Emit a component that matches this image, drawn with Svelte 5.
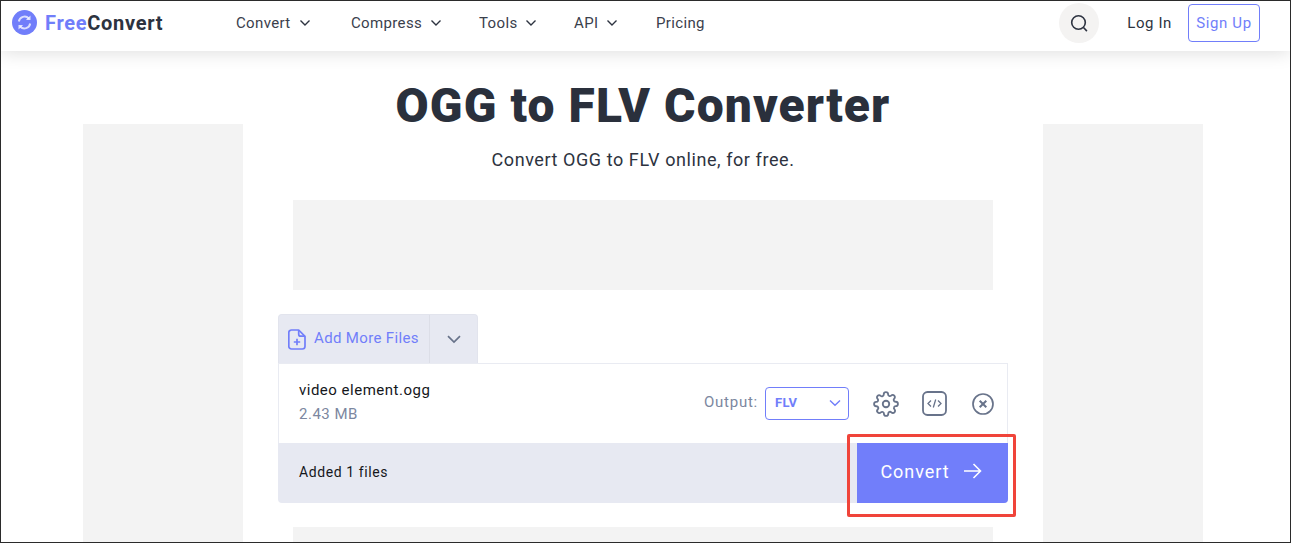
<script>
  const nav = ['Convert', 'Compress', 'Tools', 'API'];
</script>

<div class="frame">
  <header class="top">
    <a class="logo">
      <svg width="25" height="25" viewBox="0 0 25 25">
        <circle cx="12.5" cy="12.5" r="12.5" fill="#717efa" />
        <path d="M6.8 11.5a5.8 5.8 0 0 1 10-3" fill="none" stroke="#fff" stroke-width="1.9" opacity=".75" />
        <path d="M18.2 13.5a5.8 5.8 0 0 1-10 3" fill="none" stroke="#fff" stroke-width="1.9" opacity=".75" />
        <path d="M18.5 5.5v4.6h-4.6zM6.5 19.5v-4.6h4.6z" fill="#fff" opacity=".75" />
      </svg>
      <span class="free">Free</span><span class="conv">Convert</span>
    </a>
    <nav>
      {#each nav as item}
        <span class="nav-item">{item}
          <svg width="12" height="8" viewBox="0 0 12 8"><path d="M1.5 1.5 6 6l4.5-4.5" fill="none" stroke="#2d3340" stroke-width="1.4" /></svg>
        </span>
      {/each}
      <span class="nav-item">Pricing</span>
    </nav>
    <div class="right">
      <span class="search">
        <svg width="20" height="20" viewBox="0 0 20 20" fill="none" stroke="#2d3340" stroke-width="1.6"><circle cx="9.5" cy="9.5" r="6.8" /><path d="m14.5 14.5 3.4 3.6" /></svg>
      </span>
      <span class="login">Log In</span>
      <span class="signup">Sign Up</span>
    </div>
  </header>

  <main class="page">
    <div class="side"></div>
    <div class="center">
      <h1>OGG to FLV Converter</h1>
      <p class="sub">Convert OGG to FLV online, for free.</p>
      <div class="ad"></div>
      <section class="widget">
        <div class="tabs">
          <div class="add">
            <svg width="18" height="21" viewBox="0 0 18 21" fill="none" stroke="#717efa" stroke-width="1.7" stroke-linejoin="round"><path d="M3.5 1h7.2L17 7.3v10a2.700 2.700 0 0 1-2.700 2.700H3.500A2.700 2.700 0 0 1 .8 17.300V3.700A2.700 2.700 0 0 1 3.500 1z" /><path d="M10.700 1v4.200a2 2 0 0 0 2 2H17M9 9.800v6.400M5.800 13h6.400" /></svg>
            <span>Add More Files</span>
          </div>
          <div class="more">
            <svg width="14" height="9" viewBox="0 0 14 9"><path d="M1 1.200 7 7l6-5.800" fill="none" stroke="#68738a" stroke-width="1.700" /></svg>
          </div>
        </div>
        <div class="file">
          <div class="info">
            <div class="name">video element.ogg</div>
            <div class="size">2.43 MB</div>
          </div>
          <div class="controls">
            <span class="out">Output:</span>
            <span class="select">FLV
              <svg width="12" height="8" viewBox="0 0 12 8"><path d="M1 1.500 6 6.300l5-4.800" fill="none" stroke="#717efa" stroke-width="1.400" /></svg>
            </span>
            <svg class="gear" width="26" height="26" viewBox="0 0 24 24" fill="none" stroke="#68738a" stroke-width="1.700" stroke-linejoin="round"><circle cx="12" cy="12" r="3" /><path d="M19.400 15a1.650 1.650 0 0 0 .33 1.820l.06.06a2 2 0 1 1-2.830 2.830l-.06-.06a1.650 1.650 0 0 0-2.800 1.170V21a2 2 0 0 1-4 0v-.09A1.650 1.650 0 0 0 7.300 19.700l-.06.06a2 2 0 1 1-2.830-2.830l.06-.06a1.650 1.650 0 0 0-1.170-2.800H3a2 2 0 0 1 0-4h.09A1.650 1.650 0 0 0 4.300 7.300l-.06-.06a2 2 0 1 1 2.830-2.830l.06.06a1.650 1.650 0 0 0 2.800-1.170V3a2 2 0 0 1 4 0v.09a1.650 1.650 0 0 0 2.800 1.170l.06-.06a2 2 0 1 1 2.830 2.830l-.06.06a1.650 1.650 0 0 0 1.170 2.800H21a2 2 0 0 1 0 4h-.09A1.650 1.650 0 0 0 19.400 15z" /></svg>
            <svg class="code" width="25" height="25" viewBox="0 0 25 25" fill="none" stroke="#68738a" stroke-width="1.800"><rect x="1" y="1" width="23" height="23" rx="4.500" /><path d="M9 9.500 6 12.500l3 3M16 9.500l3 3-3 3M13.700 8.500l-2.400 8" stroke-width="1.300" /></svg>
            <svg class="close" width="22" height="22" viewBox="0 0 22 22" fill="none" stroke="#68738a"><circle cx="11" cy="11" r="10" stroke-width="1.700" /><path d="m7.700 7.700 6.600 6.600m0-6.600-6.600 6.600" stroke-width="2" /></svg>
          </div>
        </div>
        <div class="bar">
          <span class="added">Added 1 files</span>
          <span class="convert">Convert
            <svg width="19" height="16" viewBox="0 0 19 16" fill="none" stroke="#fff" stroke-width="1.600"><path d="M1 8h16.500M10.500 1l7 7-7 7" /></svg>
          </span>
          <span class="mark"></span>
        </div>
      </section>
      <div class="ad ad2"></div>
    </div>
    <div class="side"></div>
  </main>
</div>

<style>
  :global(body) {
    margin: 0;
    background: #fff;
  }
  .frame {
    box-sizing: border-box;
    width: 1291px;
    height: 543px;
    border: 1px solid #2b2b2b;
    overflow: hidden;
    font-family: Roboto, sans-serif;
    color: #2d3340;
    position: relative;
  }
  .top {
    display: flex;
    align-items: center;
    height: 50px;
    padding: 0 30px 7px 11px;
    box-sizing: border-box;
    background: #fff;
    box-shadow: 0 2px 18px rgba(0, 0, 0, 0.13);
    position: relative;
    z-index: 1;
  }
  .logo {
    display: flex;
    align-items: center;
    width: 224px;
    font-size: 20px;
    font-weight: 700;
    letter-spacing: 0.7px;
  }
  .logo svg {
    margin-right: 8px;
  }
  .free {
    color: #717efa;
  }
  .conv {
    color: #2d3340;
  }
  nav {
    display: grid;
    grid-template-columns: 115px 128px 95px 82px auto;
    font-size: 15px;
    letter-spacing: 0.35px;
    color: #3a404c;
  }
  .nav-item {
    display: flex;
    align-items: center;
    gap: 8px;
  }
  .right {
    margin-left: auto;
    display: flex;
    align-items: center;
  }
  .search {
    width: 40px;
    height: 40px;
    border-radius: 50%;
    background: #f4f3f2;
    display: flex;
    align-items: center;
    justify-content: center;
  }
  .login {
    font-size: 15px;
    margin-left: 28px;
    letter-spacing: 0.6px;
  }
  .signup {
    box-sizing: border-box;
    width: 72px;
    height: 38px;
    margin-left: 16px;
    border: 1px solid #717efa;
    border-radius: 4px;
    color: #717efa;
    font-size: 15px;
    letter-spacing: 0.6px;
    display: flex;
    align-items: center;
    justify-content: center;
  }
  .page {
    display: grid;
    grid-template-columns: 160px 800px 160px;
    padding-left: 82px;
  }
  .side {
    margin-top: 73px;
    height: 500px;
    background: #f3f3f3;
  }
  .center {
    display: flex;
    flex-direction: column;
    align-items: center;
  }
  h1 {
    margin: 27px 0 0;
    font-size: 48px;
    line-height: 56px;
    font-weight: 900;
    letter-spacing: 1.1px;
    color: #2a303c;
    white-space: nowrap;
  }
  .sub {
    margin: 14px 0 0;
    font-size: 18px;
    line-height: 24px;
    letter-spacing: 0.57px;
    color: #2d3340;
  }
  .ad {
    width: 700px;
    height: 90px;
    margin-top: 28px;
    background: #f3f3f3;
    flex: none;
  }
  .ad2 {
    margin-top: 24px;
  }
  .widget {
    width: 730px;
    margin-top: 24px;
  }
  .tabs {
    display: flex;
    width: 200px;
    height: 49px;
    background: #e7e9f2;
    border: 1px solid #e2e4ed;
    border-bottom: 0;
    border-radius: 4px 4px 0 0;
    box-sizing: border-box;
  }
  .add {
    width: 151px;
    display: flex;
    align-items: center;
    gap: 8px;
    padding-left: 9px;
    box-sizing: border-box;
    color: #717efa;
    font-size: 15px;
    letter-spacing: 0.35px;
    border-right: 1px solid #dcdee7;
  }
  .add span {
    padding-bottom: 2px;
  }
  .more {
    flex: 1;
    display: flex;
    align-items: center;
    justify-content: center;
  }
  .file {
    box-sizing: border-box;
    height: 80px;
    border: 1px solid #e9ebf2;
    border-bottom: 0;
    display: flex;
    align-items: center;
    justify-content: space-between;
    padding: 0 13px 0 20px;
  }
  .info {
    padding-bottom: 4px;
  }
  .name {
    font-size: 15px;
    line-height: 22px;
    color: #15171c;
    letter-spacing: 0.5px;
  }
  .size {
    font-size: 15px;
    line-height: 22px;
    color: #7c87a0;
    letter-spacing: 0.5px;
    margin-top: 2px;
  }
  .controls {
    display: flex;
    align-items: center;
  }
  .out {
    font-size: 15px;
    color: #7c87a0;
    letter-spacing: 0.75px;
    margin-right: 7px;
    padding-bottom: 3px;
  }
  .select {
    box-sizing: border-box;
    width: 84px;
    height: 33px;
    border: 1px solid #717efa;
    border-radius: 4px;
    display: flex;
    align-items: center;
    justify-content: space-between;
    padding: 0 7px 2px 9px;
    font-size: 13px;
    font-weight: 700;
    letter-spacing: 0.3px;
    color: #717efa;
  }
  .gear {
    margin-left: 24px;
  }
  .code {
    margin-left: 23px;
  }
  .close {
    margin-left: 25px;
  }
  .bar {
    height: 60px;
    background: #e7e9f2;
    border-radius: 0 0 4px 4px;
    display: flex;
    align-items: center;
    justify-content: space-between;
    padding-left: 21px;
    position: relative;
  }
  .added {
    font-size: 14px;
    color: #15171c;
    letter-spacing: 0.6px;
    padding-bottom: 2px;
  }
  .convert {
    box-sizing: border-box;
    width: 151px;
    height: 60px;
    padding: 0 3px 4px 0;
    background: #717efa;
    color: #fff;
    border-radius: 0 0 4px 0;
    display: flex;
    align-items: center;
    justify-content: center;
    gap: 13px;
    font-size: 18px;
    letter-spacing: 0.95px;
  }
  .mark {
    position: absolute;
    left: 569px;
    top: -9px;
    width: 169px;
    height: 83px;
    box-sizing: border-box;
    border: 3px solid #f0443a;
    border-radius: 2px;
  }
</style>
